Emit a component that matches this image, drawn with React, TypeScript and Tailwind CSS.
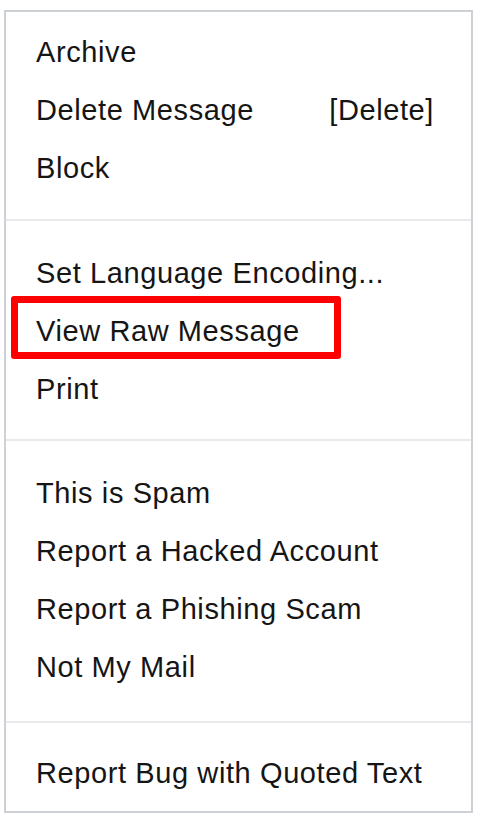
type MenuItem = {
  label: string;
  shortcut?: string;
  marked?: boolean;
};

const sections: { items: MenuItem[]; pad: string }[] = [
  {
    pad: 'pt-[11px] pb-[22px]',
    items: [{ label: 'Archive' }, { label: 'Delete Message', shortcut: '[Delete]' }, { label: 'Block' }],
  },
  {
    pad: 'pt-[23px] pb-[21px]',
    items: [{ label: 'Set Language Encoding...' }, { label: 'View Raw Message', marked: true }, { label: 'Print' }],
  },
  {
    pad: 'pt-[23px] pb-[25px]',
    items: [
      { label: 'This is Spam' },
      { label: 'Report a Hacked Account' },
      { label: 'Report a Phishing Scam' },
      { label: 'Not My Mail' },
    ],
  },
  {
    pad: 'pt-[21px] pb-[9px]',
    items: [{ label: 'Report Bug with Quoted Text' }],
  },
];

export default function App() {
  return (
    <div className="min-h-[825px] bg-white pl-[4px] pt-[10px]">
      <div className="w-[469px] border-2 border-[#cdd1d5] bg-white font-['Liberation_Sans',Arial,sans-serif] text-[29px] leading-[58px] tracking-[0.6px] text-[#151515]">
        {sections.map((section, i) => (
          <div key={i} className={`${section.pad} ${i > 0 ? 'border-t-2 border-[#e7e9eb]' : ''}`}>
            {section.items.map((item) => (
              <div key={item.label} className="relative flex justify-between pl-[30px] pr-[37px]">
                <span>{item.label}</span>
                {item.shortcut && <span>{item.shortcut}</span>}
                {item.marked && (
                  <div className="pointer-events-none absolute -top-[6px] left-[5px] h-[63px] w-[330px] rounded-[3px] border-[7px] border-[#ff0000]" />
                )}
              </div>
            ))}
          </div>
        ))}
      </div>
    </div>
  );
}
